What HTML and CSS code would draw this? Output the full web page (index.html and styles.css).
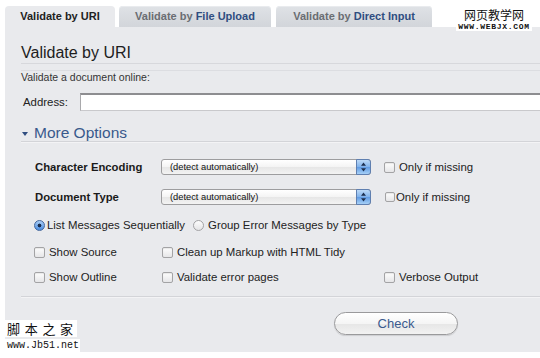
FILE: index.html
```html
<!DOCTYPE html>
<html>
  <head>
    <meta charset="utf-8">
    <title>Validate by URI</title>
    <link rel="stylesheet" href="styles.css">
  </head>
  <body>
    <div class="page">
      <ul class="tabs">
        <li class="tab active">Validate by URI</li>
        <li class="tab tab-upload">Validate by <span class="key">File Upload</span></li>
        <li class="tab tab-direct">Validate by <span class="key">Direct Input</span></li>
      </ul>

      <div class="panel">
        <h2 class="title">Validate by URI</h2>
        <p class="intro">Validate a document online:</p>
        <div class="address">
          <label for="uri">Address:</label>
          <input class="input" type="text" id="uri" name="uri">
        </div>

        <h3 class="more"><span class="arrow"></span>More Options</h3>

        <div class="options">
          <div class="field">
            <span class="field-label">Character Encoding</span>
            <div class="select">(detect automatically)<span class="select-arrows"><svg width="7" height="10" viewBox="0 0 7 10"><path d="M3.5 0.5 L6 3.8 L1 3.8 Z M3.5 9.5 L6 6.2 L1 6.2 Z" fill="#1d2f4f"/></svg></span></div>
            <label class="check only"><span class="box"></span>Only if missing</label>
          </div>
          <div class="field field-doctype">
            <span class="field-label">Document Type</span>
            <div class="select">(detect automatically)<span class="select-arrows"><svg width="7" height="10" viewBox="0 0 7 10"><path d="M3.5 0.5 L6 3.8 L1 3.8 Z M3.5 9.5 L6 6.2 L1 6.2 Z" fill="#1d2f4f"/></svg></span></div>
            <label class="check only-small"><span class="box small"></span>Only if missing</label>
          </div>

          <div class="radios">
            <label class="radio-opt"><span class="radio checked"></span>List Messages Sequentially</label>
            <label class="radio-opt second"><span class="radio"></span>Group Error Messages by Type</label>
          </div>

          <div class="grid">
            <label class="check"><span class="box"></span>Show Source</label>
            <label class="check"><span class="box"></span>Clean up Markup with HTML Tidy</label>
            <span></span>
          </div>
          <div class="grid grid-last">
            <label class="check"><span class="box"></span>Show Outline</label>
            <label class="check"><span class="box"></span>Validate error pages</label>
            <label class="check"><span class="box"></span>Verbose Output</label>
          </div>
        </div>

        <div class="divider"></div>

        <div class="submit">
          <button class="button" type="button">Check</button>
        </div>
      </div>

      <!-- watermarks -->
      <div class="mark-top">
        <div class="mark-cn">网页教学网</div>
        <div class="mark-url">WWW.WEBJX.COM</div>
      </div>
      <div class="mark-bottom">
        <div class="mark-jb">脚本之家</div>
        <div class="mark-net">www.Jb51.net</div>
      </div>
    </div>
  </body>
</html>
```

FILE: styles.css
```css
body {
margin: 0;
padding: 0;
background: #fff;
font-family: "Liberation Sans", Arial, sans-serif;
color: #222;
}

.page {
position: relative;
padding: 6px 0 0 5px;
height: 352px;
overflow: hidden;
}

/* tabs */

.tabs {
display: flex;
margin: 0;
padding: 0;
list-style: none;
height: 21px;
}

.tab {
height: 21px;
line-height: 21px;
text-align: center;
font-size: 11px;
font-weight: bold;
color: #6a6d72;
background: linear-gradient(#dfe2e6, #d2d5da);
border-radius: 4px 4px 0 0;
box-shadow: inset 0 1px 0 #e9ebee;
}

.tab.active {
width: 110px;
color: #222;
background: #e9eaed;
box-shadow: none;
}

.tab-upload {
width: 152px;
margin-left: 4px;
}

.tab-direct {
width: 156px;
margin-left: 5px;
}

.key {
color: #2f4d80;
}

/* panel */

.panel {
background: #e9eaed;
padding: 0 0 17px 16px;
}

.title {
margin: 0;
padding-top: 16px;
font-size: 16px;
font-weight: normal;
line-height: 20px;
color: #1e1e1e;
border-bottom: 1px solid #d7d8dc;
}

.intro {
margin: 6px 0 0 0;
border-top: 1px solid #dcdde1;
font-size: 10.5px;
line-height: 12px;
color: #333;
}

.address {
display: flex;
align-items: center;
margin-top: 10px;
height: 18px;
}

.address label {
font-size: 11.4px;
margin-left: 2px;
width: 57px;
}

.input {
flex: 1;
height: 18px;
box-sizing: border-box;
margin: 0;
padding: 0 4px;
background: #fff;
border: 1px solid #c9c9cc;
border-top: 2px solid #8d8d90;
border-left-color: #a9a9ac;
border-right: none;
}

.more {
margin: 13px 0 0 0;
font-size: 15.5px;
font-weight: normal;
line-height: 17px;
color: #39598c;
border-bottom: 1px solid #d3d4d8;
box-shadow: 0 1px 0 #f3f3f5;
display: flex;
align-items: center;
}

.arrow {
width: 0;
height: 0;
margin: 2px 6px 0 1px;
border-left: 3.5px solid transparent;
border-right: 3.5px solid transparent;
border-top: 4px solid #2f4d80;
}

/* options */

.options {
margin-top: 17px;
}

.field {
display: flex;
align-items: center;
height: 16px;
}

.field-doctype {
margin-top: 14px;
}

.field-label {
width: 126px;
padding-left: 14px;
font-size: 11.3px;
font-weight: bold;
color: #1a1a1a;
}

.select {
position: relative;
width: 210px;
height: 16px;
box-sizing: border-box;
padding-left: 8px;
font-size: 9.3px;
line-height: 14px;
color: #111;
border: 1px solid #9d9d9f;
border-radius: 3px;
background: linear-gradient(#ffffff, #f4f4f4 50%, #e6e6e6 51%, #f3f3f3);
}

.select-arrows {
position: absolute;
right: -1px;
top: -1px;
width: 15px;
height: 16px;
display: flex;
align-items: center;
justify-content: center;
border: 1px solid #5f7fb0;
box-sizing: border-box;
border-radius: 0 3px 3px 0;
background: linear-gradient(#bcd9f7, #7fb2ec 50%, #5f9ae3 51%, #a6d0f7);
}

.check, .radio-opt {
display: inline-flex;
align-items: center;
font-size: 11.4px;
color: #222;
white-space: nowrap;
}

.box {
width: 11px;
height: 11px;
box-sizing: border-box;
margin-right: 4px;
border: 1px solid #a3a3a5;
border-radius: 2px;
background: linear-gradient(#fdfdfd, #e6e6e8);
box-shadow: inset 0 1px 1px rgba(0, 0, 0, 0.08);
}

.box.small {
width: 10px;
height: 10px;
margin-right: 1px;
}

.only {
margin-left: 13px;
}

.only-small {
margin-left: 14px;
}

.radios {
display: flex;
align-items: center;
height: 14px;
margin-top: 13px;
padding-left: 13px;
}

.radio {
width: 11px;
height: 11px;
box-sizing: border-box;
margin-right: 2px;
border: 1px solid #a3a3a5;
border-radius: 50%;
background: linear-gradient(#fdfdfd, #e4e4e6);
}

.radio.checked {
border-color: #44679d;
background: radial-gradient(circle, #1b2d4d 0, #1b2d4d 1.6px, transparent 2.2px), linear-gradient(#a9cdf5, #4a8ce0);
}

.radio-opt.second {
margin-left: 8px;
}

.second .radio {
margin-right: 4px;
}

.grid {
display: grid;
grid-template-columns: 128px 222px auto;
align-items: center;
height: 14px;
margin-top: 13px;
padding-left: 13px;
}

.grid-last {
margin-top: 11px;
}

.divider {
margin-top: 12px;
border-top: 1px solid #d3d4d8;
box-shadow: 0 1px 0 #f3f3f5;
}

.submit {
margin-top: 15px;
padding-left: 313px;
}

.button {
display: block;
width: 124px;
height: 23px;
margin: 0;
padding: 0;
font-family: "Liberation Sans", Arial, sans-serif;
font-size: 13px;
color: #3a5a8e;
border: 1px solid #9a9a9c;
border-radius: 12px;
background: linear-gradient(#ffffff, #f5f5f5 50%, #e6e6e6 51%, #f2f2f2);
box-shadow: 0 1px 1px rgba(0, 0, 0, 0.12);
}

/* watermarks */

.mark-top {
position: absolute;
left: 456px;
top: 7px;
width: 76px;
text-align: center;
}

.mark-cn {
font-family: "Noto Sans CJK SC", sans-serif;
font-size: 12px;
line-height: 16px;
color: #111;
background: #fff;
}

.mark-url {
font-family: "Liberation Mono", monospace;
font-weight: bold;
font-size: 8px;
line-height: 8px;
letter-spacing: 0.7px;
color: #111;
background: #fff;
}

.mark-bottom {
position: absolute;
left: 5px;
top: 320px;
}

.mark-jb {
width: 72px;
height: 17px;
padding-left: 2px;
box-sizing: border-box;
overflow: hidden;
white-space: nowrap;
font-family: "Noto Sans CJK SC", sans-serif;
font-size: 13px;
line-height: 17px;
letter-spacing: 4.7px;
color: #111;
background: #fff;
}

.mark-net {
width: 75px;
height: 13px;
margin-top: 2px;
padding-left: 2px;
box-sizing: border-box;
font-family: "Liberation Mono", monospace;
font-size: 10px;
line-height: 13px;
color: #111;
background: #fff;
}
```
